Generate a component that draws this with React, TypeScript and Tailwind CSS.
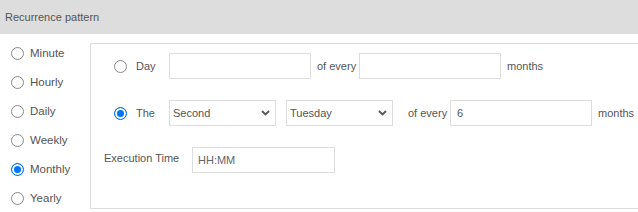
import { useState } from "react";

const periods = ["Minute", "Hourly", "Daily", "Weekly", "Monthly", "Yearly"];

const radioCls =
  "h-[13px] w-[13px] shrink-0 appearance-none rounded-full border border-[#8a8a8a] bg-white checked:border-[#0075ff] checked:bg-[#0075ff] checked:shadow-[inset_0_0_0_2px_#fff]";

function Chevron() {
  return (
    <svg
      className="pointer-events-none absolute right-[6px] top-1/2 -translate-y-1/2"
      width="9"
      height="6"
      viewBox="0 0 9 6"
      fill="none"
    >
      <path d="M1 1l3.5 3.5L8 1" stroke="#555" strokeWidth="1.8" />
    </svg>
  );
}

function Select({ value, options, className }: { value: string; options: string[]; className?: string }) {
  return (
    <div className={`relative h-[26px] ${className ?? ""}`}>
      <select
        defaultValue={value}
        className="h-full w-full appearance-none border border-[#dddddd] bg-white pl-[3px] text-[11px] text-[#555] outline-none"
      >
        {options.map((o) => (
          <option key={o}>{o}</option>
        ))}
      </select>
      <Chevron />
    </div>
  );
}

export default function App() {
  const [period, setPeriod] = useState("Monthly");
  const [mode, setMode] = useState("the");

  return (
    <div className="h-[212px] w-[638px] overflow-hidden bg-white font-['Liberation_Sans',Arial,sans-serif] text-[11px] text-[#555]">
      {/* Header */}
      <div className="flex h-[34px] items-center bg-[#dddddd] pl-[5px] text-[11px] text-[#555]">
        Recurrence pattern
      </div>

      <div className="flex">
        {/* Period list */}
        <div className="flex w-[90px] flex-col pt-[5px]">
          {periods.map((p) => (
            <label key={p} className="flex h-[29px] items-center gap-[6px] pl-[11px] text-[11.5px]">
              <input
                type="radio"
                name="period"
                checked={period === p}
                onChange={() => setPeriod(p)}
                className={radioCls}
              />
              {p}
            </label>
          ))}
        </div>

        {/* Monthly options */}
        <div className="mt-[9px] h-[166px] flex-1 border-y border-l border-[#dddddd] pt-[9px]">
          <div className="flex h-[26px] items-center pl-[23px]">
            <input
              type="radio"
              name="mode"
              checked={mode === "day"}
              onChange={() => setMode("day")}
              className={radioCls}
            />
            <span className="ml-[9px] w-[33px]">Day</span>
            <input className="h-[26px] w-[142px] border border-[#dddddd] px-[6px] outline-none" />
            <span className="ml-[6px] w-[42px]">of every</span>
            <input className="h-[26px] w-[142px] border border-[#dddddd] px-[6px] outline-none" />
            <span className="ml-[6px]">months</span>
          </div>

          <div className="mt-[21px] flex h-[26px] items-center pl-[23px]">
            <input
              type="radio"
              name="mode"
              checked={mode === "the"}
              onChange={() => setMode("the")}
              className={radioCls}
            />
            <span className="ml-[9px] w-[33px]">The</span>
            <Select value="Second" options={["First", "Second", "Third", "Fourth", "Last"]} className="w-[107px]" />
            <Select
              value="Tuesday"
              options={["Monday", "Tuesday", "Wednesday", "Thursday", "Friday", "Saturday", "Sunday"]}
              className="ml-[10px] w-[107px]"
            />
            <span className="ml-[15px] w-[42px]">of every</span>
            <input
              defaultValue="6"
              className="h-[26px] w-[142px] border border-[#dddddd] px-[6px] text-[#555] outline-none"
            />
            <span className="ml-[6px]">months</span>
          </div>

          <div className="mt-[21px] flex items-start pl-[13px]">
            <span className="w-[88px] pt-[3px]">Execution Time</span>
            <input
              placeholder="HH:MM"
              className="h-[26px] w-[143px] border border-[#dddddd] px-[5px] text-[#555] outline-none placeholder:text-[#666]"
            />
          </div>
        </div>
      </div>
    </div>
  );
}
